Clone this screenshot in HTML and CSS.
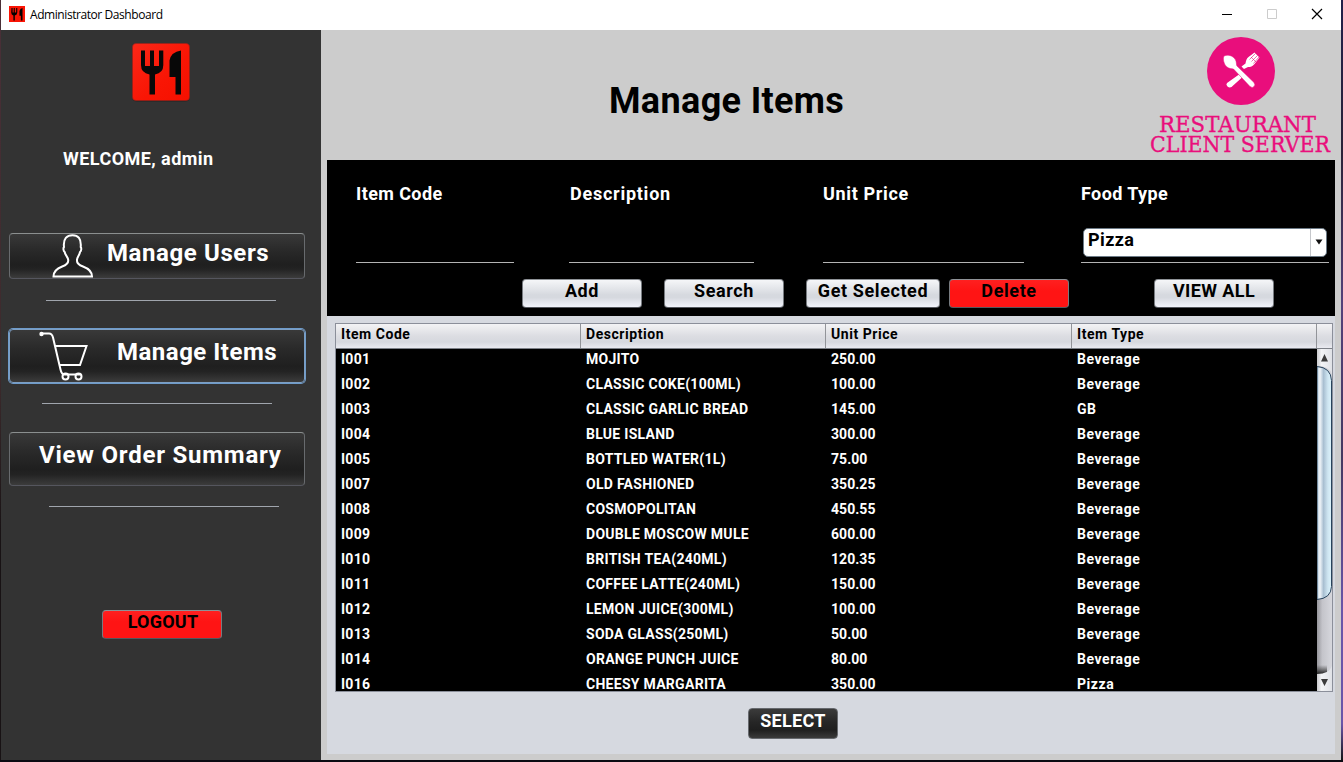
FILE: index.html
```
<!DOCTYPE html>
<html lang="en">
<head>
<meta charset="utf-8">
<title>Administrator Dashboard</title>
<link rel="stylesheet" href="styles.css">
</head>
<body>
<div class="window">
  <header class="titlebar">
    <svg class="app-icon" viewBox="0 0 58 58"><rect width="58" height="58" fill="#fa1505"/><path d="M9 7h4v17h4V7h4v17h5V7h4v17q0 9-9 10v19h-5V34q-8-1-8-10zM49 7v46h-6V35h-5V18q2-9 11-11z"/></svg>
    <span class="caption">Administrator Dashboard</span>
    <div class="controls">
      <svg width="12" height="12" viewBox="0 0 12 12"><path d="M1 6.500h10" stroke="#000"/></svg>
      <svg width="12" height="12" viewBox="0 0 12 12"><path d="M1.500 1.500h9v9h-9z" fill="none" stroke="#ccc"/></svg>
      <svg width="12" height="12" viewBox="0 0 12 12"><path d="M1 1l10 10M11 1L1 11" stroke="#000" stroke-width="1.200"/></svg>
    </div>
  </header>
  <div class="content">
    <aside class="sidebar">
      <svg class="brand" viewBox="0 0 58 59"><defs><linearGradient id="r" x2="1" y2="1"><stop stop-color="#fb2818"/><stop offset=".6" stop-color="#f91504"/><stop offset="1" stop-color="#f51000"/></linearGradient></defs><rect x=".5" y="1.500" width="57" height="57" rx="4" fill="#1c1c1c" opacity=".6"/><rect x=".5" y=".5" width="57" height="57" rx="3.500" fill="url(#r)" stroke="#9c2018" stroke-width=".6"/><path d="M9 7.500h4v15.500h5V7.500h4v15.500h5V7.500h4.300V22q0 8-8.300 9.500v20h-5.500v-20Q9 30 9 22zM49 7.500v44h-5.500V34H37.500V17.500Q39 9 49 7.500z" fill="#080808"/></svg>
      <p class="welcome">WELCOME, admin</p>
      <button class="nav users">
        <svg width="42" height="45" viewBox="0 0 42 45"><path d="M1.500 42.500h38.500c0-6-5-8.500-9-10-4-1.500-6.500-3-6-6.500 0-3 2.500-4.500 3-8 1.500-1 1.600-4 .7-5C29.500 4.500 26 1.200 20.500 1.200S11 4.500 12 13c-.9 1-.8 4 .7 5 .5 3.500 3.500 5 3.500 8 .5 3.500-2 5-6 6.500-4 1.500-8.700 4-8.700 10z" fill="none" stroke="#fff" stroke-width="2"/></svg>
        <span>Manage Users</span>
      </button>
      <i class="rule r1"></i>
      <button class="nav items">
        <svg width="50" height="50" viewBox="0 0 50 50"><g fill="none" stroke="#fff" stroke-width="2"><path d="M2 2.500h8q3 0 4 4l7.500 32q1 5 4 5h16M15.500 15h32l-6.500 19H20.500"/><circle cx="26.500" cy="45.500" r="3"/><circle cx="39.500" cy="45.500" r="3"/></g><circle cx="2.500" cy="3" r="2.200" fill="#fff"/></svg>
        <span>Manage Items</span>
      </button>
      <i class="rule r2"></i>
      <button class="nav orders"><span>View Order Summary</span></button>
      <i class="rule r3"></i>
      <button class="btn red logout">LOGOUT</button>
    </aside>
    <main class="main">
      <div class="heading">
        <h1>Manage Items</h1>
        <div class="logo">
          <svg width="68" height="68" viewBox="0 0 68 68">
            <circle cx="34" cy="34" r="34" fill="#e90e7c"/>
            <g fill="#fff">
              <path d="M37 32l-2.500-2.500 4-3c.5-3 1-5 3-6.500l6-4.500 5 5-5 6.500c-2 2.500-4 3-6.500 3zM32 37.500l3 3-10.500 9.500q-2 1.200-4-.5t-.5-3.500z"/>
              <path d="M17 19c4-2 9 0 11 3 2 3 1 5.500 2 7l17 16.500q1.500 2 0 4t-4 0L26.500 32c-2-.5-4 0-6.500-2-3-2.500-4.500-8-3-11z" stroke="#e90e7c" stroke-width=".5"/>
            </g>
            <path d="M42.500 22.500l6-6M44.500 24.500l6-6M46.500 26.500l5.500-6.500M44 20l6 6" stroke="#e90e7c" stroke-width=".6"/>
          </svg>
          <svg width="184" height="20" viewBox="0 0 184 20"><text x="10" y="18" textLength="157" lengthAdjust="spacingAndGlyphs">RESTAURANT</text></svg>
          <svg width="184" height="24" viewBox="0 0 184 24"><text x="1" y="18" textLength="180" lengthAdjust="spacingAndGlyphs">CLIENT SERVER</text></svg>
        </div>
      </div>
      <section class="form">
        <div class="fields">
          <label class="code">Item Code<i></i></label>
          <label class="desc">Description<i></i></label>
          <label class="price">Unit Price<i></i></label>
          <label class="type">Food Type
            <div class="combo"><span>Pizza</span><b><svg width="8" height="6" viewBox="0 0 8 6"><path d="M.5.500h7L4 5.500z" fill="#111"/></svg></b></div>
            <i></i></label>
        </div>
        <div class="actions">
          <button class="btn">Add</button>
          <button class="btn">Search</button>
          <button class="btn wide">Get Selected</button>
          <button class="btn red delete">Delete</button>
          <button class="btn all">VIEW ALL</button>
        </div>
      </section>
      <section class="results">
        <div class="table">
          <div class="thead"><span>Item Code</span><span>Description</span><span>Unit Price</span><span>Item Type</span><span></span></div>
          <div class="tbody">
            <div class="rows">
              <div class="row"><span>I001</span><span>MOJITO</span><span>250.00</span><span>Beverage</span></div>
              <div class="row"><span>I002</span><span>CLASSIC COKE(100ML)</span><span>100.00</span><span>Beverage</span></div>
              <div class="row"><span>I003</span><span>CLASSIC GARLIC BREAD</span><span>145.00</span><span>GB</span></div>
              <div class="row"><span>I004</span><span>BLUE ISLAND</span><span>300.00</span><span>Beverage</span></div>
              <div class="row"><span>I005</span><span>BOTTLED WATER(1L)</span><span>75.00</span><span>Beverage</span></div>
              <div class="row"><span>I007</span><span>OLD FASHIONED</span><span>350.25</span><span>Beverage</span></div>
              <div class="row"><span>I008</span><span>COSMOPOLITAN</span><span>450.55</span><span>Beverage</span></div>
              <div class="row"><span>I009</span><span>DOUBLE MOSCOW MULE</span><span>600.00</span><span>Beverage</span></div>
              <div class="row"><span>I010</span><span>BRITISH TEA(240ML)</span><span>120.35</span><span>Beverage</span></div>
              <div class="row"><span>I011</span><span>COFFEE LATTE(240ML)</span><span>150.00</span><span>Beverage</span></div>
              <div class="row"><span>I012</span><span>LEMON JUICE(300ML)</span><span>100.00</span><span>Beverage</span></div>
              <div class="row"><span>I013</span><span>SODA GLASS(250ML)</span><span>50.00</span><span>Beverage</span></div>
              <div class="row"><span>I014</span><span>ORANGE PUNCH JUICE</span><span>80.00</span><span>Beverage</span></div>
              <div class="row last"><span>I016</span><span>CHEESY MARGARITA</span><span>350.00</span><span>Pizza</span></div>
            </div>
            <svg class="scroll" width="15" height="342" viewBox="0 0 15 342">
              <defs>
                <linearGradient id="tr"><stop stop-color="#96969c"/><stop offset=".35" stop-color="#c4c4ca"/><stop offset="1" stop-color="#d6d7dd"/></linearGradient>
                <linearGradient id="th"><stop stop-color="#b5cddd"/><stop offset=".2" stop-color="#f2f6fa"/><stop offset=".45" stop-color="#a9bfd1"/><stop offset=".75" stop-color="#cfe6f2"/><stop offset="1" stop-color="#dcf3fb"/></linearGradient>
                <linearGradient id="bt"><stop stop-color="#c9cacd"/><stop offset=".3" stop-color="#f3f4f6"/><stop offset="1" stop-color="#dfe1e6"/></linearGradient>
                <linearGradient id="sh" x2="0" y2="1"><stop stop-color="#333" stop-opacity="0"/><stop offset="1" stop-color="#222"/></linearGradient>
              </defs>
              <rect width="15" height="342" fill="url(#tr)"/>
              <rect y="316" width="10" height="9" fill="url(#sh)"/>
              <path d="M0 0h15v25q-3-8-15-8z" fill="url(#bt)"/>
              <path d="M0 17.500q14 1 14.500 14v206q-.5 12-14.500 13z" fill="url(#th)" stroke="#28435c"/>
              <path d="M0 325q12 0 15-8v25H0z" fill="url(#bt)"/>
              <path d="M4 12.500h7L7.500 5zM4 330h7l-3.500 7z" fill="#3c3c3c"/>
            </svg>
          </div>
        </div>
        <button class="select">SELECT</button>
      </section>
    </main>
  </div>
</div>
</body>
</html>
```
FILE: styles.css
```
* { box-sizing: border-box; }
body { margin: 0; width: 1343px; height: 762px; overflow: hidden; padding: 0 2px 2px 1px; font-family: Roboto, "Liberation Sans", sans-serif; font-weight: 700;
  background: linear-gradient(#0a0a12, #0a0a12) 0 760px / 100% 2px no-repeat, linear-gradient(#4a3038, #3c2a2c 50%, #181214 70%) 0 0 / 1px 100% no-repeat, linear-gradient(#20204a, #2a2238 20%, #54417a 40%, #443860 60%, #6a55a8 80%, #6a55a8 95%, #111); }
i, b { font-style: normal; font-weight: inherit; }
button { font: inherit; padding: 0; margin: 0; }
.window { width: 1340px; height: 760px; display: flex; flex-direction: column; }
.titlebar { height: 30px; background: #fff; display: flex; align-items: center; padding: 0 18px 2px 8px; }
.app-icon { width: 16px; height: 16px; }
.caption { margin-left: 5px; font: 400 12px "Open Sans", "Noto Sans", sans-serif; letter-spacing: -.43px; color: #000; padding-top: 1px; }
.controls { margin-left: auto; display: flex; gap: 33px; }
.content { flex: 1; display: flex; min-height: 0; }

.sidebar { width: 320px; background: #333; padding: 13px 0 0 8px; display: flex; flex-direction: column; align-items: flex-start; color: #fff; }
.brand { width: 58px; height: 59px; margin-left: 123px; }
.welcome { margin: 46px 0 0 54px; font-size: 18px; line-height: 22px; letter-spacing: .45px; }
.nav { width: 296px; border: 1px solid; border-color: #8b8f8f #686b6e #55565e #686b6e; border-radius: 4px; color: #fff; font-size: 24px; letter-spacing: .6px; display: flex; align-items: flex-start;
  background: linear-gradient(#393939, #2a2a2a 35%, #1f1f1f 70%, #232323 80%, #3c3c3c); }
.users { height: 46px; margin-top: 63px; padding-left: 42px; line-height: 38px; }
.users span { margin-left: 13px; }
.items { height: 54px; margin-top: 28px; padding: 1px 0 0 29px; line-height: 42px; letter-spacing: .5px; box-shadow: 0 0 0 1px #6f9ccb; border-color: #7d9fc4; }
.items span { margin-left: 28px; }
.orders { height: 54px; margin-top: 28px; padding-left: 29px; line-height: 44px; letter-spacing: .78px; }
.rule { display: block; width: 230px; height: 1px; background: #a0a5ad; flex: none; }
.r1 { margin: 21px 0 0 37px; }
.r2 { margin: 20px 0 0 33px; }
.r3 { margin: 20px 0 0 40px; }

.btn { width: 120px; height: 29px; border: 1px solid; border-color: #8e9297 #777b80 #55585e; border-radius: 4px; font-size: 18px; line-height: 22px; letter-spacing: .6px; color: #000; display: flex; justify-content: center;
  background: linear-gradient(#f5f6f8, #d6d9df 55%, #d6d9df 65%, #f2f3fb); }
.red { background: linear-gradient(#ff2020, #ff1414 40%, #ff1414); }
.wide { width: 134px; }
.logout { margin: 103px 0 0 93px; letter-spacing: .2px; padding-left: 2px; }

.main { flex: 1; background: #ccc; padding: 0 6px 6px; display: flex; flex-direction: column; }
.heading { height: 130px; flex: none; display: grid; grid-template-columns: 282px 1fr 186px; }
h1 { grid-column: 2; margin: 49px 0 0; font-size: 36px; line-height: 44px; letter-spacing: .35px; color: #000; }
.logo { display: flex; flex-direction: column; padding-top: 7px; }
.logo svg { display: block; flex: none; overflow: visible; }
.logo svg:first-child { margin: 0 0 9px 58px; }
.logo text { font-family: "DejaVu Serif", serif; font-size: 22.5px; font-weight: 400; fill: #e90e7c; stroke: #e90e7c; stroke-width: .35px; }
.form { height: 156px; flex: none; background: #000; color: #fff; }
.fields { height: 103px; padding: 23px 6px 0 29px; display: flex; }
.fields label { font-size: 18px; line-height: 22px; letter-spacing: .4px; display: flex; flex-direction: column; justify-content: space-between; height: 80px; }
.fields i { display: block; height: 1px; background: #b4b4b4; }
.code { width: 158px; }
.fields .desc { width: 187px; margin-left: 55px; padding-left: 1px; letter-spacing: .75px; }
.desc i { width: 185px; margin-left: -1px; }
.fields .price { width: 201px; margin-left: 67px; letter-spacing: .65px; }
.type { width: 248px; margin-left: 57px; }
.combo { width: 244px; height: 29px; margin: 17px 0 0 2px; background: #fff; border: 1px solid #6c7a86; border-radius: 5px; color: #000; display: flex; justify-content: space-between; padding-left: 4px; }
.combo b { width: 16px; border-left: 1px solid #c5c7cb; display: flex; align-items: center; justify-content: center; }
.actions { padding: 16px 0 0 195px; display: flex; gap: 22px; }
.delete { margin-left: -13px; }
.all { margin-left: 63px; letter-spacing: .4px; }

.results { flex: 1; background: #d6d9e0; padding: 7px 2px 0 8px; display: flex; flex-direction: column; align-items: flex-start; }
.table { width: 998px; height: 369px; border: 1px solid #8b8f9a; display: flex; flex-direction: column; font-size: 14px; line-height: 21px; letter-spacing: .55px; }
.thead, .row { display: grid; grid-template-columns: 245px 245px 246px 245px 15px; }
.thead { height: 25px; color: #000; border-bottom: 1px solid #7c8087; background: linear-gradient(#f3f3f5, #dcdde2 50%, #d6d8de 75%, #e9eaf0); }
.thead span { border-right: 1px solid #929499; padding-left: 5px; }
.thead span:last-child { border: 0; }
.tbody { flex: 1; min-height: 0; display: flex; background: #000; color: #fff; }
.rows { flex: 1; overflow: hidden; }
.row { height: 25px; grid-template-columns: 245px 245px 246px 1fr; }
.row span { padding-left: 5px; white-space: nowrap; }
.row span:nth-child(1) { letter-spacing: .25px; }
.row span:nth-child(2) { letter-spacing: .28px; }
.row span:nth-child(3) { letter-spacing: .05px; }
.last { height: 17px; }
.scroll { flex: none; }
.select { width: 90px; height: 31px; margin: 16px 0 0 413px; border: 1px solid #66696e; border-radius: 4px; color: #fff; font-size: 18px; line-height: 24px; letter-spacing: .3px; display: flex; justify-content: center;
  background: linear-gradient(#3b3b3b, #262626 45%, #1f1f1f 72%, #3a3a3a); }
```
